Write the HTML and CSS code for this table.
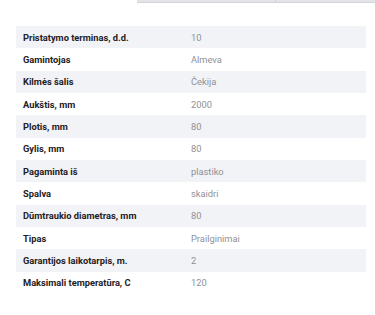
FILE: index.html
```html
<!DOCTYPE html>
<html lang="lt">
<head>
<meta charset="utf-8">
<link rel="stylesheet" href="styles.css">
</head>
<body>
<div class="topbar">
  <div class="tab"></div>
  <div class="tab tab-last"></div>
</div>
<table class="specs">
  <tbody>
    <tr><th>Pristatymo terminas, d.d.</th><td>10</td></tr>
    <tr><th>Gamintojas</th><td>Almeva</td></tr>
    <tr><th>Kilmės šalis</th><td>Čekija</td></tr>
    <tr><th>Aukštis, mm</th><td>2000</td></tr>
    <tr><th>Plotis, mm</th><td>80</td></tr>
    <tr><th>Gylis, mm</th><td>80</td></tr>
    <tr><th>Pagaminta iš</th><td>plastiko</td></tr>
    <tr><th>Spalva</th><td>skaidri</td></tr>
    <tr><th>Dūmtraukio diametras, mm</th><td>80</td></tr>
    <tr><th>Tipas</th><td>Prailginimai</td></tr>
    <tr><th>Garantijos laikotarpis, m.</th><td>2</td></tr>
    <tr><th>Maksimali temperatūra, C</th><td>120</td></tr>
  </tbody>
</table>
</body>
</html>
```
FILE: styles.css
```css
html, body {
  margin: 0;
  padding: 0;
  background: #ffffff;
}
body {
  font-family: Roboto, "Liberation Sans", Arial, sans-serif;
  width: 375px;
  height: 315px;
  overflow: hidden;
}
.topbar {
  display: flex;
  margin-left: 137px;
  height: 3px;
}
.tab {
  flex: 0 0 139px;
  background: #e3e4e9;
  border-bottom: 1px solid #d3d4da;
  box-sizing: border-box;
  border-right: 1px solid #d0d1d7;
}
.tab-last {
  flex: 1 1 auto;
  border-right: none;
}
.specs {
  border-collapse: collapse;
  margin: 23px 0 0 16px;
  width: 350px;
  font-size: 9.3px;
}
.specs tr {
  height: 22.35px;
}
.specs tr:nth-child(odd) {
  background: #f2f3f7;
}
.specs th {
  text-align: left;
  font-weight: 700;
  color: #1f2023;
  width: 168px;
  padding: 0 0 0 7px;
  vertical-align: middle;
}
.specs td {
  color: #8f9095;
  padding: 0;
  vertical-align: middle;
}
```
